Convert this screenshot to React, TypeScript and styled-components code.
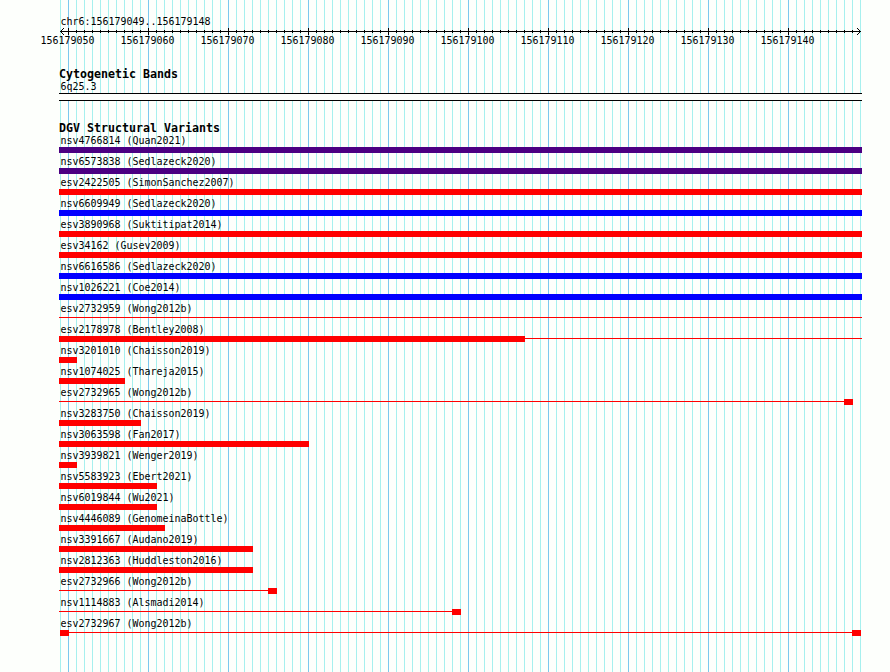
import styled, { createGlobalStyle } from "styled-components";

const GlobalStyle = createGlobalStyle`
  body {
    margin: 0;
    background-color: #fdfffc;
  }
`;

const REGION_START = 156179049;
const REGION_END = 156179148;
const BASE_WIDTH = 8;

// Minor lines on every base, major lines on every tenth one.
// The first two layers keep the side margins clear of lines.
const Panel = styled.main`
  box-sizing: border-box;
  width: 890px;
  height: 672px;
  padding: 15px 28px 0 59px;
  overflow: hidden;
  color: #000;
  font-family: "DejaVu Sans Mono", "Liberation Mono", monospace;
  font-size: 10px;
  background-image: linear-gradient(#fdfffc, #fdfffc),
    linear-gradient(#fdfffc, #fdfffc),
    linear-gradient(to right, #7cc8ee 1px, transparent 1px),
    linear-gradient(to right, #a6f0ee 1px, transparent 1px);
  background-position: 0 0, 861px 0, 68px 0, 60px 0;
  background-size: 60px 100%, 29px 100%, 80px 100%, 8px 100%;
  background-repeat: no-repeat, no-repeat, repeat-x, repeat-x;
`;

const Label = styled.div`
  height: 13px;
  padding-left: 1.5px;
  font-size: 9.97px;
  line-height: 13px;
  white-space: pre;
  transform: scaleY(1.08);
`;

const TrackTitle = styled.h2`
  height: 12px;
  margin: 0;
  font-size: 11.63px;
  font-weight: bold;
  line-height: 12px;
  white-space: pre;
`;

const Ruler = styled.svg`
  display: block;
  width: 803px;
  height: 7px;
  shape-rendering: crispEdges;
`;

const Positions = styled.div`
  display: flex;
  width: 803px;
  height: 34px;
  margin-top: -1px;
  margin-left: -31px;
`;

const Position = styled(Label)`
  flex: 0 0 80px;
  box-sizing: border-box;
  padding-left: 12.5px;
`;

const Band = styled.div`
  box-sizing: border-box;
  width: 803px;
  height: 8px;
  margin-bottom: 21px;
  border: solid #000;
  border-width: 1px 0;
  background-color: #fdfffc;
`;

const VariantList = styled.ul`
  list-style: none;
  margin: 0;
  padding: 0;
`;

const VariantItem = styled.li`
  height: 21px;
`;

const Glyph = styled.div`
  display: flex;
  align-items: flex-start;
  width: 803px;
  height: 6px;
`;

const Block = styled.div<{ $width: number; $color: string }>`
  width: ${({ $width }) => $width}px;
  height: 6px;
  background-color: ${({ $color }) => $color};
`;

const Connector = styled.div<{ $width: number }>`
  width: ${({ $width }) => $width}px;
  height: 1px;
  margin-top: 2px;
  background-color: #f00;
`;

const Gap = styled.div`
  width: 1px;
`;

type Segment = ["block" | "line" | "gap", number];

interface VariantType {
  name: string;
  study: string;
  color?: string;
  segments: Segment[];
}

const GAIN = "#00f";
const LOSS = "#f00";
const COMPLEX = "#4b0082";

const variants: VariantType[] = [
  { name: "nsv4766814", study: "Quan2021", color: COMPLEX, segments: [["block", 803]] },
  { name: "nsv6573838", study: "Sedlazeck2020", color: COMPLEX, segments: [["block", 803]] },
  { name: "esv2422505", study: "SimonSanchez2007", segments: [["block", 803]] },
  { name: "nsv6609949", study: "Sedlazeck2020", color: GAIN, segments: [["block", 803]] },
  { name: "esv3890968", study: "Suktitipat2014", segments: [["block", 803]] },
  { name: "esv34162", study: "Gusev2009", segments: [["block", 803]] },
  { name: "nsv6616586", study: "Sedlazeck2020", color: GAIN, segments: [["block", 803]] },
  { name: "nsv1026221", study: "Coe2014", color: GAIN, segments: [["block", 803]] },
  { name: "esv2732959", study: "Wong2012b", segments: [["line", 803]] },
  { name: "esv2178978", study: "Bentley2008", segments: [["block", 466], ["line", 337]] },
  { name: "nsv3201010", study: "Chaisson2019", segments: [["block", 18]] },
  { name: "nsv1074025", study: "Thareja2015", segments: [["block", 66]] },
  { name: "esv2732965", study: "Wong2012b", segments: [["line", 785], ["block", 9]] },
  { name: "nsv3283750", study: "Chaisson2019", segments: [["block", 82]] },
  { name: "nsv3063598", study: "Fan2017", segments: [["block", 250]] },
  { name: "nsv3939821", study: "Wenger2019", segments: [["block", 18]] },
  { name: "nsv5583923", study: "Ebert2021", segments: [["block", 98]] },
  { name: "nsv6019844", study: "Wu2021", segments: [["block", 98]] },
  { name: "nsv4446089", study: "GenomeinaBottle", segments: [["block", 106]] },
  { name: "nsv3391667", study: "Audano2019", segments: [["block", 194]] },
  { name: "nsv2812363", study: "Huddleston2016", segments: [["block", 194]] },
  { name: "esv2732966", study: "Wong2012b", segments: [["line", 209], ["block", 9]] },
  { name: "nsv1114883", study: "Alsmadi2014", segments: [["line", 393], ["block", 9]] },
  {
    name: "esv2732967",
    study: "Wong2012b",
    segments: [["gap", 1], ["block", 9], ["line", 783], ["block", 9]],
  },
];

const bases = Array.from(
  { length: REGION_END - REGION_START + 1 },
  (_, i) => REGION_START + i
);

const Variant = ({ name, study, color = LOSS, segments }: VariantType) => {
  return (
    <VariantItem>
      <Label>{`${name} (${study})`}</Label>
      <Glyph>
        {segments.map(([kind, width], i) => {
          if (kind === "gap") return <Gap key={i} />;
          if (kind === "line") return <Connector key={i} $width={width} />;
          return <Block key={i} $width={width} $color={color} />;
        })}
      </Glyph>
    </VariantItem>
  );
};

const Scale = () => {
  return (
    <Ruler viewBox="0 0 803 7">
      <rect x="1" y="3" width="801" height="1" />
      {bases.slice(1).map((base, i) => {
        const major = base % 10 === 0;
        return (
          <rect
            key={base}
            x={(i + 1) * BASE_WIDTH + 1}
            y={major ? 0 : 2}
            width="1"
            height={major ? 7 : 3}
          />
        );
      })}
      {[1, 2, 3].map((n) => (
        <g key={n}>
          <rect x={1 + n} y={3 - n} width="1" height="1" />
          <rect x={1 + n} y={3 + n} width="1" height="1" />
          <rect x={801 - n} y={3 - n} width="1" height="1" />
          <rect x={801 - n} y={3 + n} width="1" height="1" />
        </g>
      ))}
    </Ruler>
  );
};

const App = () => {
  return (
    <>
      <GlobalStyle />
      <Panel>
        <Label>{`chr6:${REGION_START}..${REGION_END}`}</Label>
        <Scale />
        <Positions>
          {bases
            .filter((base) => base % 10 === 0)
            .map((base) => (
              <Position key={base}>{base}</Position>
            ))}
        </Positions>
        <TrackTitle>Cytogenetic Bands</TrackTitle>
        <Label>6q25.3</Label>
        <Band />
        <TrackTitle>DGV Structural Variants</TrackTitle>
        <VariantList>
          {variants.map((variant) => (
            <Variant key={variant.name} {...variant} />
          ))}
        </VariantList>
      </Panel>
    </>
  );
};

export default App;
